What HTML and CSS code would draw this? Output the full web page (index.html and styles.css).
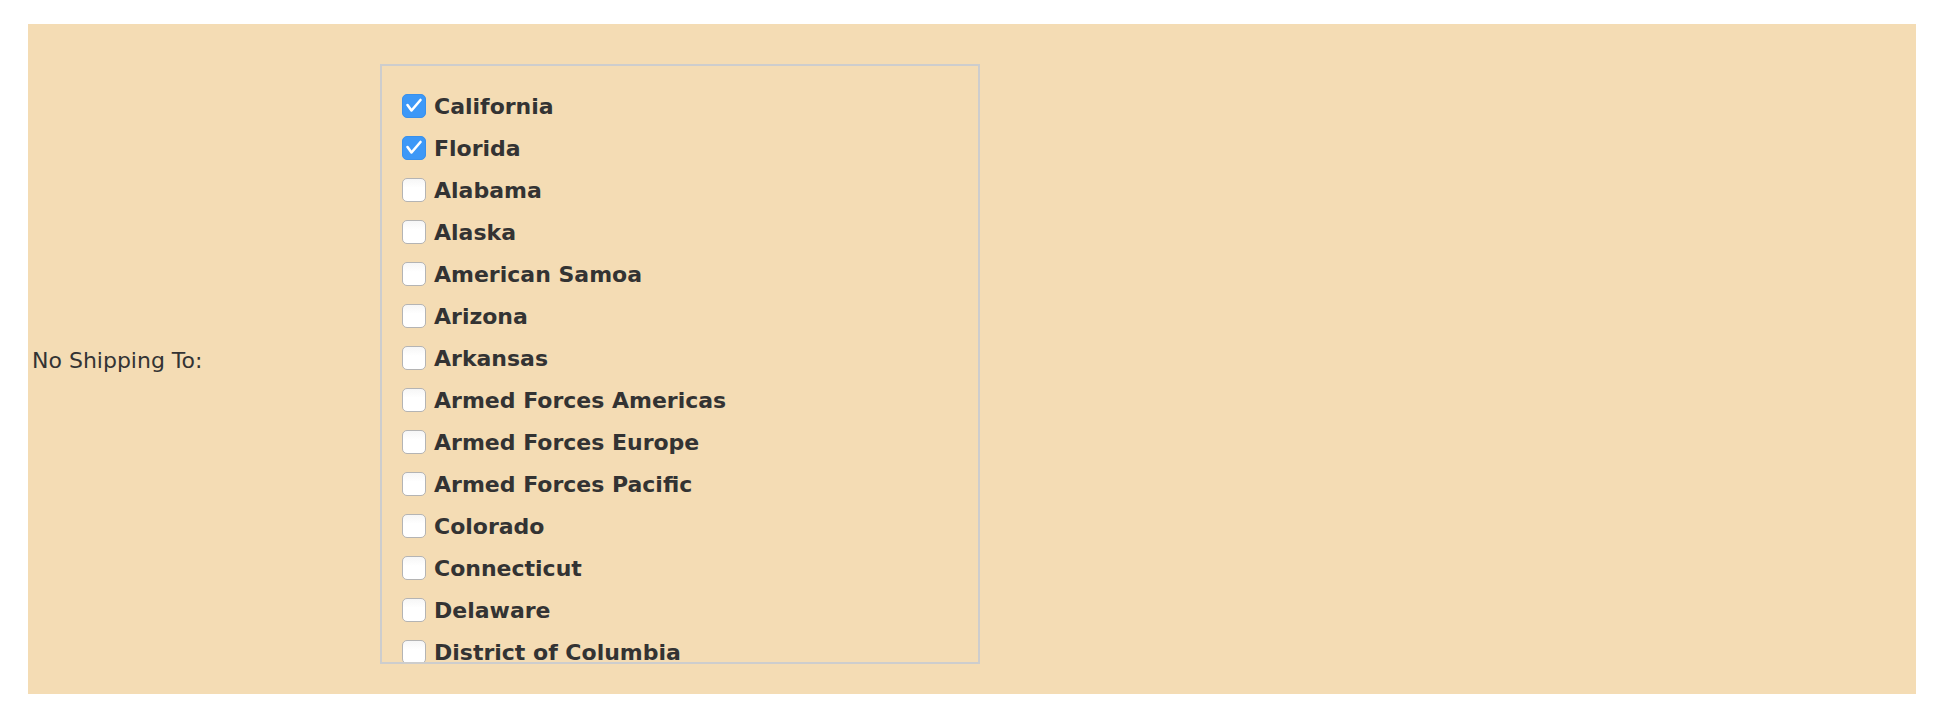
FILE: index.html
```html
<!DOCTYPE html>
<html lang="en">
<head>
  <meta charset="UTF-8" />
  <meta name="viewport" content="width=device-width, initial-scale=1.0" />
  <title>Shipping Restrictions</title>
  <link rel="stylesheet" href="styles.css">
</head>
<body>
  <div class="shipping-row">
    <div class="field-label">No Shipping To:</div>

    <div class="state-list">
      <label class="state"><input type="checkbox" checked /><span class="box"><svg viewBox="0 0 24 24"><path d="M5.5 11 L9.5 16.5 L18.5 6" /></svg></span>California</label>
      <label class="state"><input type="checkbox" checked /><span class="box"><svg viewBox="0 0 24 24"><path d="M5.5 11 L9.5 16.5 L18.5 6" /></svg></span>Florida</label>
      <label class="state"><input type="checkbox" /><span class="box"></span>Alabama</label>
      <label class="state"><input type="checkbox" /><span class="box"></span>Alaska</label>
      <label class="state"><input type="checkbox" /><span class="box"></span>American Samoa</label>
      <label class="state"><input type="checkbox" /><span class="box"></span>Arizona</label>
      <label class="state"><input type="checkbox" /><span class="box"></span>Arkansas</label>
      <label class="state"><input type="checkbox" /><span class="box"></span>Armed Forces Americas</label>
      <label class="state"><input type="checkbox" /><span class="box"></span>Armed Forces Europe</label>
      <label class="state"><input type="checkbox" /><span class="box"></span>Armed Forces Pacific</label>
      <label class="state"><input type="checkbox" /><span class="box"></span>Colorado</label>
      <label class="state"><input type="checkbox" /><span class="box"></span>Connecticut</label>
      <label class="state"><input type="checkbox" /><span class="box"></span>Delaware</label>
      <label class="state"><input type="checkbox" /><span class="box"></span>District of Columbia</label>
    </div>
  </div>
</body>
</html>
```

FILE: styles.css
```css
body {
  margin: 24px 32px 0 28px;
  font-family: "DejaVu Sans", Verdana, sans-serif;
  font-size: 22px;
  color: #333;
  background-color: #fff;
}
.shipping-row {
  display: flex;
  align-items: center;
  height: 670px;
  background-color: #f4dcb4;
}
.field-label {
  width: 352px;
  padding: 2px 0 0 4px;
  box-sizing: border-box;
  flex-shrink: 0;
}
.state-list {
  align-self: flex-start;
  margin-top: 40px;
  width: 600px;
  height: 600px;
  box-sizing: border-box;
  border: 2px solid #cdcdcd;
  padding: 19px 0 0 20px;
  overflow: hidden;
}
.state {
  display: flex;
  align-items: center;
  height: 42px;
  font-weight: bold;
  cursor: pointer;
}
.state input {
  display: none;
}
.box {
  width: 24px;
  height: 24px;
  box-sizing: border-box;
  margin-right: 8px;
  border: 1px solid #b4b4b4;
  border-radius: 5px;
  background: linear-gradient(#f6f6f6, #fff 40%);
  flex-shrink: 0;
}
.box svg {
  display: none;
  width: 24px;
  height: 24px;
  margin: -1px;
}
.box path {
  fill: none;
  stroke: #fff;
  stroke-width: 2.6;
  stroke-linecap: round;
  stroke-linejoin: round;
}
.state input:checked + .box {
  background: #3d98f7;
  border-color: #3890ec;
}
.state input:checked + .box svg {
  display: block;
}
```
